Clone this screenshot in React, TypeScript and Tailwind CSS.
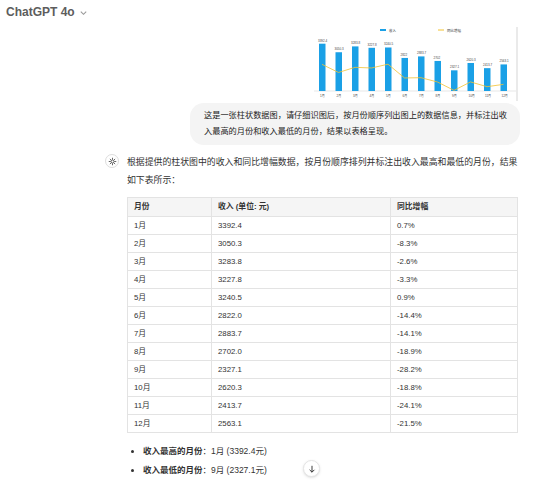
import React from 'react';

const rows = [
  ['1月', '3392.4', '0.7%'],
  ['2月', '3050.3', '-8.3%'],
  ['3月', '3283.8', '-2.6%'],
  ['4月', '3227.8', '-3.3%'],
  ['5月', '3240.5', '0.9%'],
  ['6月', '2822.0', '-14.4%'],
  ['7月', '2883.7', '-14.1%'],
  ['8月', '2702.0', '-18.9%'],
  ['9月', '2327.1', '-28.2%'],
  ['10月', '2620.3', '-18.8%'],
  ['11月', '2413.7', '-24.1%'],
  ['12月', '2563.1', '-21.5%'],
];

const Chart = () => {
  const vals = rows.map((r) => parseFloat(r[1]));
  const pct = [0.7, -8.3, -2.6, -3.3, 0.9, -14.4, -14.1, -18.9, -28.2, -18.8, -24.1, -21.5];
  const base = 66;
  const pts = pct.map((p, i) => `${12 + i * 16.5},${40 - p * 0.9}`).join(' ');
  return (
    <svg width="212" height="78" viewBox="0 0 212 78" className="bg-white">
      <rect x="70" y="4" width="6" height="2" fill="#1aa0e6" />
      <text x="79" y="7" fontSize="3.5" fill="#333">收入</text>
      <line x1="128" y1="5" x2="134" y2="5" stroke="#f2c230" />
      <text x="137" y="7" fontSize="3.5" fill="#333">同比增幅</text>
      <line x1="4" y1={base} x2="206" y2={base} stroke="#ccc" strokeWidth="0.5" />
      <line x1="207" y1="2" x2="207" y2="76" stroke="#bbb" strokeWidth="0.6" />
      {vals.map((v, i) => {
        const h = (v - 1500) / 40;
        const x = 9 + i * 16.5;
        return (
          <g key={i}>
            <rect x={x} y={base - h} width="6.5" height={h} fill="#1aa0e6" />
            <text x={x - 1} y={base - h - 2} fontSize="3" fill="#444">{v}</text>
            <text x={x + 1} y={base + 6} fontSize="3" fill="#444">{rows[i][0]}</text>
          </g>
        );
      })}
      <polyline points={pts} fill="none" stroke="#f2c230" strokeWidth="0.8" />
    </svg>
  );
};

export default function App() {
  return (
    <div
      className="w-[554px] h-[482px] bg-white overflow-hidden relative text-[#0d0d0d]"
      style={{ fontFamily: '"Liberation Sans", "Noto Sans CJK SC", sans-serif' }}
    >
      <div className="absolute left-[6px] top-[3px] flex items-center gap-1 text-[12px] text-[#5d5d5d] font-semibold">
        ChatGPT 4o
        <svg width="9" height="9" viewBox="0 0 10 10" fill="none" stroke="#999" strokeWidth="1.2">
          <path d="M2 4l3 3 3-3" />
        </svg>
      </div>

      <div className="pt-[25px] flex flex-col items-end pr-[34px]">
        <div className="w-[212px] h-[78px] mr-[-2px]">
          <Chart />
        </div>
        <div className="w-[330px] bg-[#f4f4f4] rounded-[14px] pl-[14px] pr-[8px] py-[5px] text-[8.2px] leading-[16px] text-[#222]">
          这是一张柱状数据图，请仔细识图后，按月份顺序列出图上的数据信息，并标注出收入最高的月份和收入最低的月份，结果以表格呈现。
        </div>
      </div>

      <div className="flex gap-[8px] pl-[105px] pt-[8px] pr-[30px]">
        <div className="w-[14px] h-[14px] rounded-full border border-[#ddd] flex items-center justify-center shrink-0 mt-[1px]">
          <svg width="9" height="9" viewBox="0 0 24 24" fill="none" stroke="#333" strokeWidth="2">
            <circle cx="12" cy="12" r="4" />
            <path d="M12 2v5M12 17v5M2 12h5M17 12h5M5 5l3.5 3.5M15.5 15.5L19 19M5 19l3.5-3.5M15.5 8.5L19 5" />
          </svg>
        </div>
        <div className="flex-1">
          <p className="text-[8.9px] leading-[18px] text-[#333] w-[396px]">
            根据提供的柱状图中的收入和同比增幅数据，按月份顺序排列并标注出收入最高和最低的月份，结果如下表所示：
          </p>
          <table className="mt-[8px] w-[391px] border-collapse text-[7.8px] leading-none text-[#333] border border-[#e3e3e3]">
            <thead>
              <tr className="bg-[#f5f5f5] font-bold">
                <th className="h-[19px] p-0 text-left pl-[6px] w-[84px] border border-[#e3e3e3]">月份</th>
                <th className="h-[19px] p-0 text-left pl-[6px] w-[179px] border border-[#e3e3e3]">收入 (单位: 元)</th>
                <th className="h-[19px] p-0 text-left pl-[6px] border border-[#e3e3e3]">同比增幅</th>
              </tr>
            </thead>
            <tbody>
              {rows.map((r) => (
                <tr key={r[0]}>
                  {r.map((c, j) => (
                    <td key={j} className="h-[18px] p-0 pl-[6px] border border-[#e3e3e3]">{c}</td>
                  ))}
                </tr>
              ))}
            </tbody>
          </table>
          <ul className="mt-[12px] text-[8.5px] text-[#333] space-y-[6px]">
            <li className="flex items-center gap-[9px] h-[13px]">
              <span className="w-[3px] h-[3px] bg-[#333] rounded-full ml-[4px]" />
              <span><b>收入最高的月份</b>：1月 (3392.4元)</span>
            </li>
            <li className="flex items-center gap-[9px] h-[13px]">
              <span className="w-[3px] h-[3px] bg-[#333] rounded-full ml-[4px]" />
              <span><b>收入最低的月份</b>：9月 (2327.1元)</span>
            </li>
          </ul>
        </div>
      </div>

      <div className="absolute left-[303px] top-[460px] w-[17px] h-[17px] rounded-full bg-white border border-[#e5e5e5] shadow flex items-center justify-center">
        <svg width="8" height="8" viewBox="0 0 10 10" fill="none" stroke="#333" strokeWidth="1.2">
          <path d="M5 1v8M2 6l3 3 3-3" />
        </svg>
      </div>
    </div>
  );
}
